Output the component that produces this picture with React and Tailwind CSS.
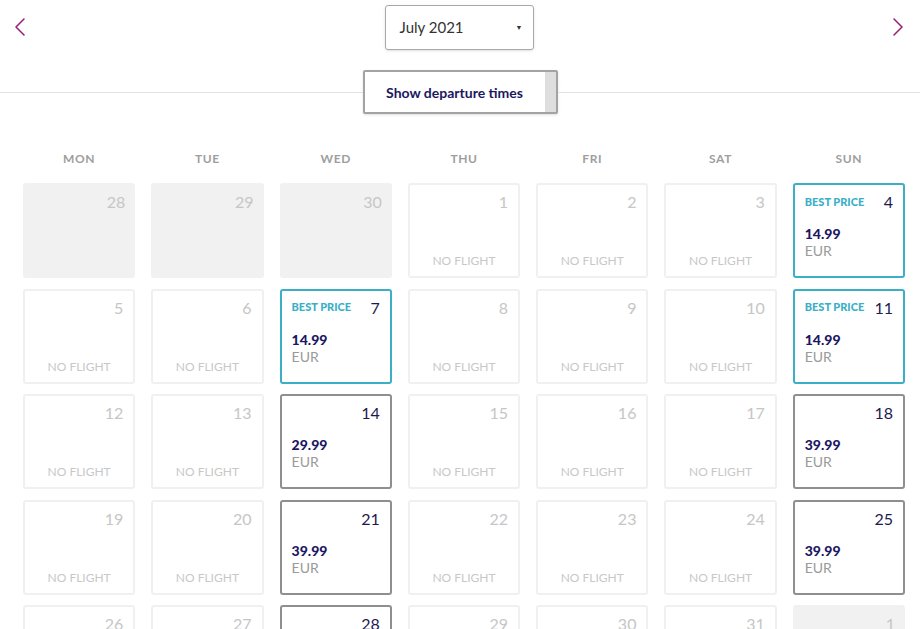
import React from "react";

const weeks = [
  [
    { d: 28, t: "past" },
    { d: 29, t: "past" },
    { d: 30, t: "past" },
    { d: 1, t: "none" },
    { d: 2, t: "none" },
    { d: 3, t: "none" },
    { d: 4, t: "best", p: "14.99" },
  ],
  [
    { d: 5, t: "none" },
    { d: 6, t: "none" },
    { d: 7, t: "best", p: "14.99" },
    { d: 8, t: "none" },
    { d: 9, t: "none" },
    { d: 10, t: "none" },
    { d: 11, t: "best", p: "14.99" },
  ],
  [
    { d: 12, t: "none" },
    { d: 13, t: "none" },
    { d: 14, t: "price", p: "29.99" },
    { d: 15, t: "none" },
    { d: 16, t: "none" },
    { d: 17, t: "none" },
    { d: 18, t: "price", p: "39.99" },
  ],
  [
    { d: 19, t: "none" },
    { d: 20, t: "none" },
    { d: 21, t: "price", p: "39.99" },
    { d: 22, t: "none" },
    { d: 23, t: "none" },
    { d: 24, t: "none" },
    { d: 25, t: "price", p: "39.99" },
  ],
  [
    { d: 26, t: "none" },
    { d: 27, t: "none" },
    { d: 28, t: "price", p: "39.99" },
    { d: 29, t: "none" },
    { d: 30, t: "none" },
    { d: 31, t: "none" },
    { d: 1, t: "past" },
  ],
];

const days = ["MON", "TUE", "WED", "THU", "FRI", "SAT", "SUN"];

function Chevron({ dir }) {
  return (
    <svg width="12" height="20" viewBox="0 0 12 20" fill="none">
      <path
        d={dir === "left" ? "M10 2 L2 10 L10 18" : "M2 2 L10 10 L2 18"}
        stroke="#9b2279"
        strokeWidth="1.6"
        strokeLinecap="round"
        strokeLinejoin="round"
      />
    </svg>
  );
}

function Day({ day }) {
  if (day.t === "past") {
    return (
      <div className="h-[95px] rounded-[3px] bg-[#f1f1f1] flex justify-end pt-[9px] pr-[10px]">
        <span className="text-[16px] leading-5 text-[#c6c6c6]">{day.d}</span>
      </div>
    );
  }
  if (day.t === "none") {
    return (
      <div className="h-[95px] rounded-[3px] border-2 border-[#f0f0f0] bg-white flex flex-col justify-between pt-[7px] pb-[7px] pr-[10px]">
        <span className="self-end text-[16px] leading-5 text-[#c6c6c6]">{day.d}</span>
        <span className="text-center pl-[10px] text-[12px] leading-4 text-[#c8c8c8]">NO FLIGHT</span>
      </div>
    );
  }
  const best = day.t === "best";
  return (
    <div
      className={
        "h-[95px] rounded-[3px] border-2 bg-white flex flex-col pl-[10px] pr-[10px] pt-[7px] " +
        (best ? "border-[#3aafc6]" : "border-[#8f8f8f]")
      }
    >
      <div className="flex items-center justify-between h-5">
        <span className="text-[11px] font-black text-[#3aafc6]">
          {best ? "BEST PRICE" : ""}
        </span>
        <span className="text-[16px] leading-5 text-[#1d1a4f]">{day.d}</span>
      </div>
      <div className="mt-[13px] text-[14px] leading-[17px] font-black text-[#1c1762]">{day.p}</div>
      <div className="text-[14px] leading-[17px] text-[#9a9a9a]">EUR</div>
    </div>
  );
}

export default function App() {
  return (
    <div className="w-full h-[629px] overflow-hidden bg-white font-['Lato','Noto_Sans',sans-serif]">
      <div className="flex items-center justify-between pl-[14px] pr-[16px] pt-1 h-[50px]">
        <Chevron dir="left" />
        <div className="w-[149px] h-[45px] border border-[#a8a8a8] rounded-[3px] flex items-center justify-between pl-[14px] pr-[10px] shadow-sm">
          <span className="text-[15px] text-[#333]">July 2021</span>
          <span className="text-[7px] text-[#333]">▼</span>
        </div>
        <Chevron dir="right" />
      </div>

      <div className="flex items-center mt-5">
        <div className="flex-1 h-[1px] bg-[#e3e3e3]" />
        <button className="w-[195px] h-[44px] border-2 border-[#a3a3a3] rounded-[2px] flex items-stretch bg-white shadow-sm">
          <span className="flex-1 flex items-center justify-center text-[14px] font-bold text-[#1c1762]">
            Show departure times
          </span>
          <span className="w-[11px] bg-[#dedede]" />
        </button>
        <div className="flex-1 h-[1px] bg-[#e3e3e3]" />
      </div>

      <div className="px-[23px] pr-[15px] mt-[36px]">
        <div className="grid grid-cols-7 gap-x-4">
          {days.map((d) => (
            <div key={d} className="text-center text-[12px] font-bold tracking-[0.6px] text-[#9e9e9e]">
              {d}
            </div>
          ))}
        </div>
        <div className="grid grid-cols-7 gap-x-4 gap-y-[10.5px] mt-[15px]">
          {weeks.flat().map((day, i) => (
            <Day key={i} day={day} />
          ))}
        </div>
      </div>
    </div>
  );
}
